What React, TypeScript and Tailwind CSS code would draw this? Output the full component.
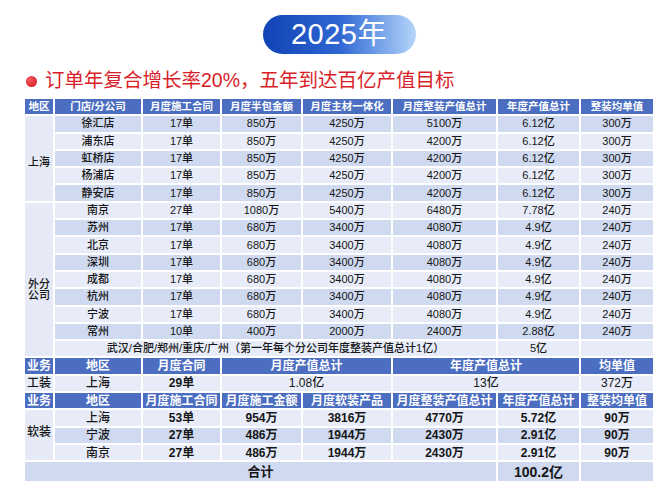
import React from "react";

type Row = string[];

const HEAD = "bg-[#4b6ec1] text-white font-bold";
const DARK = "bg-[#cfdaf1]";
const LIGHT = "bg-[#e7ecf8]";
const REGION = "bg-[#e5eaf6]";

const shanghai: Row[] = [
  ["徐汇店", "17单", "850万", "4250万", "5100万", "6.12亿", "300万"],
  ["浦东店", "17单", "850万", "4250万", "4200万", "6.12亿", "300万"],
  ["虹桥店", "17单", "850万", "4250万", "4200万", "6.12亿", "300万"],
  ["杨浦店", "17单", "850万", "4250万", "4200万", "6.12亿", "300万"],
  ["静安店", "17单", "850万", "4250万", "4200万", "6.12亿", "300万"],
];

const branches: Row[] = [
  ["南京", "27单", "1080万", "5400万", "6480万", "7.78亿", "240万"],
  ["苏州", "17单", "680万", "3400万", "4080万", "4.9亿", "240万"],
  ["北京", "17单", "680万", "3400万", "4080万", "4.9亿", "240万"],
  ["深圳", "17单", "680万", "3400万", "4080万", "4.9亿", "240万"],
  ["成都", "17单", "680万", "3400万", "4080万", "4.9亿", "240万"],
  ["杭州", "17单", "680万", "3400万", "4080万", "4.9亿", "240万"],
  ["宁波", "17单", "680万", "3400万", "4080万", "4.9亿", "240万"],
  ["常州", "10单", "400万", "2000万", "2400万", "2.88亿", "240万"],
];

const soft: Row[] = [
  ["上海", "53单", "954万", "3816万", "4770万", "5.72亿", "90万"],
  ["宁波", "27单", "486万", "1944万", "2430万", "2.91亿", "90万"],
  ["南京", "27单", "486万", "1944万", "2430万", "2.91亿", "90万"],
];

function Cell({ className = "", children }: { className?: string; children?: React.ReactNode }) {
  return (
    <div className={`flex items-center justify-center whitespace-nowrap leading-none ${className}`}>
      {children}
    </div>
  );
}

export default function App() {
  // shanghai + branches share one stripe sequence, starting dark
  const upper = [...shanghai, ...branches];

  return (
    <div
      className="h-[504px] w-[670px] overflow-hidden bg-white pt-[15px]"
      style={{ fontFamily: '"Liberation Sans", "Noto Sans CJK SC", sans-serif' }}
    >
      <div className="ml-[25px] w-[628px]">
        <div className="mx-auto flex h-[39px] w-[153px] items-center justify-center rounded-full bg-gradient-to-r from-[#1043b4] via-[#2f66d2] to-[#b5d5fa] text-[29px] tracking-[0.5px] text-white">
          2025年
        </div>

        <div className="mt-[14px] flex h-[26px] items-center">
          <span className="ml-[1px] h-[11px] w-[11px] rounded-full bg-[radial-gradient(circle_at_35%_35%,#f25a5f,#d3121c)]" />
          <span className="ml-[8px] text-[19.5px] text-[#d81e28]">
            订单年复合增长率20%，五年到达百亿产值目标
          </span>
        </div>

        <div className="mt-[5px] grid grid-cols-[28px_86px_77px_79px_88px_103px_81px_72px] grid-rows-[repeat(21,15.3px)_19px] gap-[2px] text-[11px] font-medium text-[#161616]">
          {["地区", "门店/分公司", "月度施工合同", "月度半包金额", "月度主材一体化", "月度整装产值总计", "年度产值总计", "整装均单值"].map((h) => (
            <Cell key={h} className={`${HEAD} text-[10.5px]`}>
              {h}
            </Cell>
          ))}

          {upper.map((row, i) => (
            <React.Fragment key={row[0] + i}>
              {i === 0 && <Cell className={`${REGION} row-span-5 pt-[8px]`}>上海</Cell>}
              {i === 5 && (
                <Cell className={`${REGION} row-span-9 flex-col pt-[20px] leading-[14px]`}>
                  <span>外分</span>
                  <span>公司</span>
                </Cell>
              )}
              {row.map((v, j) => (
                <Cell key={j} className={i % 2 === 0 ? DARK : LIGHT}>
                  {v}
                </Cell>
              ))}
            </React.Fragment>
          ))}

          <Cell className={`${LIGHT} col-span-5`}>
            武汉/合肥/郑州/重庆/广州（第一年每个分公司年度整装产值总计1亿）
          </Cell>
          <Cell className={LIGHT}>5亿</Cell>
          <Cell className={LIGHT} />

          <Cell className={`${HEAD} text-[12px]`}>业务</Cell>
          <Cell className={`${HEAD} text-[12px]`}>地区</Cell>
          <Cell className={`${HEAD} text-[12px]`}>月度合同</Cell>
          <Cell className={`${HEAD} col-span-2 text-[12px]`}>月度产值总计</Cell>
          <Cell className={`${HEAD} col-span-2 text-[12px]`}>年度产值总计</Cell>
          <Cell className={`${HEAD} text-[12px]`}>均单值</Cell>

          <Cell className={`${LIGHT} text-[12px]`}>工装</Cell>
          <Cell className={`${LIGHT} text-[12px]`}>上海</Cell>
          <Cell className={`${LIGHT} text-[12px] font-bold`}>29单</Cell>
          <Cell className={`${LIGHT} col-span-2 text-[12px]`}>1.08亿</Cell>
          <Cell className={`${LIGHT} col-span-2 text-[12px]`}>13亿</Cell>
          <Cell className={`${LIGHT} text-[12px]`}>372万</Cell>

          {["业务", "地区", "月度施工合同", "月度施工金额", "月度软装产品", "月度整装产值总计", "年度产值总计", "整装均单值"].map((h) => (
            <Cell key={"s" + h} className={`${HEAD} text-[12px]`}>
              {h}
            </Cell>
          ))}

          {soft.map((row, i) => (
            <React.Fragment key={"soft" + i}>
              {i === 0 && <Cell className={`${REGION} row-span-3 pb-[6px] text-[12px]`}>软装</Cell>}
              {row.map((v, j) => (
                <Cell
                  key={j}
                  className={`${i % 2 === 1 ? DARK : LIGHT} text-[12px] ${j === 0 ? "" : "font-bold"}`}
                >
                  {v}
                </Cell>
              ))}
            </React.Fragment>
          ))}

          <Cell className={`${DARK} col-span-6 text-[13px] font-bold`}>合计</Cell>
          <Cell className={`${DARK} text-[14px] font-bold`}>100.2亿</Cell>
          <Cell className={DARK} />
        </div>
      </div>
    </div>
  );
}
